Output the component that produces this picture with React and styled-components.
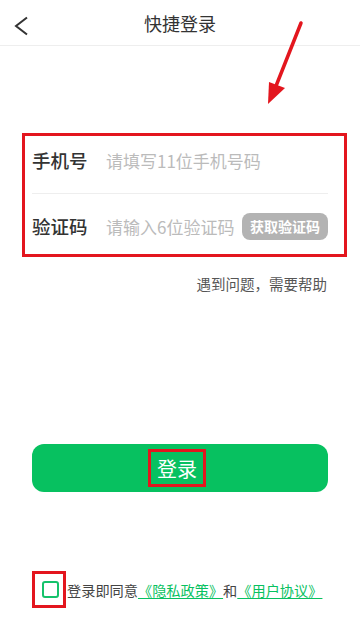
import styled, { createGlobalStyle } from 'styled-components';

const GlobalStyle = createGlobalStyle`
    * {
        box-sizing: border-box;
    }
    body {
        margin: 0;
        background: #fff;
        font-family: 'Noto Sans CJK SC', 'Noto Sans', sans-serif;
    }
`;

const Page = styled.div`
    position: relative;
    width: 360px;
    height: 619px;
    overflow: hidden;
    background: #fff;
`;

const Header = styled.div`
    height: 46px;
    border-bottom: 1px solid #eeeeee;
    display: flex;
    align-items: center;
    justify-content: center;
    position: relative;
`;

const Back = styled.div`
    position: absolute;
    left: 14px;
    top: 16px;
    width: 16px;
    height: 20px;
    display: flex;
    align-items: center;
`;

const Title = styled.div`
    font-size: 18px;
    color: #333;
    line-height: 24px;
`;

const Form = styled.div`
    margin: 87px 13px 0 22px;
    border: 3px solid #e3161e;
    padding: 0 16px 4px 7px;
`;

const Row = styled.div`
    height: 48px;
    display: flex;
    align-items: center;
`;

const Label = styled.div`
    width: 74px;
    font-size: 18.5px;
    font-weight: 500;
    color: #333;
    flex-shrink: 0;
`;

const Placeholder = styled.div`
    flex: 1;
    font-size: 17px;
    color: #bbbbbb;
    white-space: nowrap;
`;

const Divider = styled.div`
    height: 1px;
    background: #eeeeee;
    margin: 9px 0 8px;
`;

const CodeButton = styled.div`
    height: 27px;
    padding: 0 8px;
    border-radius: 8px;
    background: #b3b3b3;
    color: #fff;
    font-size: 14px;
    font-weight: 700;
    display: flex;
    align-items: center;
    white-space: nowrap;
`;

const Help = styled.div`
    margin: 16px 33px 0 0;
    text-align: right;
    font-size: 14.5px;
    line-height: 22px;
    color: #555;
`;

const LoginButton = styled.div`
    margin: 149px 32px 0;
    height: 48px;
    border-radius: 12px;
    background: #07c160;
    display: flex;
    align-items: center;
    justify-content: center;
`;

const LoginText = styled.div`
    border: 3px solid #e3161e;
    width: 58px;
    height: 38px;
    margin-left: -6px;
    color: #fff;
    font-size: 20px;
    display: flex;
    align-items: center;
    justify-content: center;
`;

const Agreement = styled.div`
    margin: 79px 0 0 32px;
    display: flex;
    align-items: center;
    font-size: 14.2px;
    color: #444;
    white-space: nowrap;
`;

const CheckFrame = styled.div`
    width: 34px;
    height: 37px;
    border: 3px solid #e3161e;
    display: flex;
    align-items: center;
    justify-content: center;
    margin-right: 1px;
`;

const Check = styled.div`
    width: 17px;
    height: 17px;
    border: 2px solid #15c26b;
    border-radius: 3px;
    margin-left: 3px;
`;

const Link = styled.span`
    color: #07c160;
    text-decoration: underline;
    text-underline-offset: 2px;
`;

const Arrow = styled.svg`
    position: absolute;
    left: 0;
    top: 0;
    pointer-events: none;
`;

const App = () => {
    return (
        <Page>
            <GlobalStyle />
            <Header>
                <Back>
                    <svg width="16" height="20" viewBox="0 0 16 20">
                        <path d="M13 1.5 L2 10 L13 18.5" fill="none" stroke="#333" strokeWidth="2" />
                    </svg>
                </Back>
                <Title>快捷登录</Title>
            </Header>
            <Form>
                <Row>
                    <Label>手机号</Label>
                    <Placeholder>请填写11位手机号码</Placeholder>
                </Row>
                <Divider />
                <Row>
                    <Label>验证码</Label>
                    <Placeholder>请输入6位验证码</Placeholder>
                    <CodeButton>获取验证码</CodeButton>
                </Row>
            </Form>
            <Help>遇到问题，需要帮助</Help>
            <LoginButton>
                <LoginText>登录</LoginText>
            </LoginButton>
            <Agreement>
                <CheckFrame>
                    <Check />
                </CheckFrame>
                登录即同意<Link>《隐私政策》</Link>和<Link>《用户协议》</Link>
            </Agreement>
            <Arrow width="360" height="619">
                <line x1="301" y1="23" x2="276" y2="86" stroke="#e3161e" strokeWidth="3.5" strokeLinecap="round" />
                <polygon points="268,104 269,82 285,88" fill="#e3161e" />
            </Arrow>
        </Page>
    );
};

export default App;
